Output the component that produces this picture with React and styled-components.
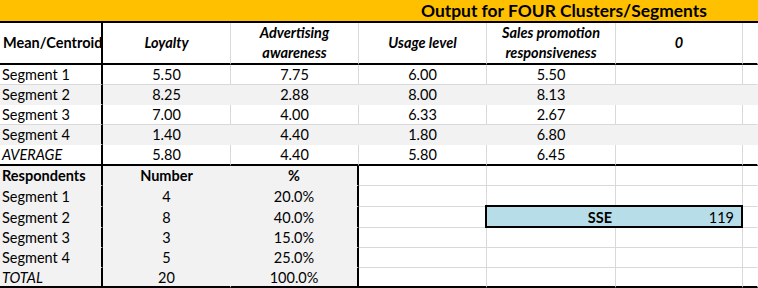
import React from 'react';
import styled, { createGlobalStyle } from 'styled-components';

const GlobalStyle = createGlobalStyle`
  html, body {
    margin: 0;
    padding: 0;
    background: #ffffff;
  }
  body {
    font-family: 'Lato', 'Liberation Sans', sans-serif;
    color: #000;
  }
`;

const GRID = '#d9d9d9';
const GRAY = '#f2f2f2';

const Sheet = styled.div`
  display: grid;
  width: 758px;
  grid-template-columns: 103px 128px 128px 128px 129px 127px 15px;
  grid-template-rows: 23px 42px 20px 20px 20px 20px 21px 20px 21px 21px 20px 20px 20px;
  font-size: 14.5px;
  overflow: hidden;
`;

const TitleBar = styled.div`
  grid-column: 1 / -1;
  background: #ffc000;
  border-bottom: 2px solid #000;
  display: flex;
  align-items: center;
  padding: 1px 0 0 421px;
  font-size: 17.4px;
  font-weight: 700;
  white-space: nowrap;
  line-height: 1;
`;

const borderFor = (kind, bg) => {
  if (kind === 'thick') return '2px solid #000';
  if (kind === 'none') return `1px solid ${bg}`;
  return `1px solid ${GRID}`;
};

const Cell = styled.div`
  box-sizing: border-box;
  background: ${(p) => p.$bg || '#fff'};
  border-right: ${(p) => borderFor(p.$right, p.$bg || '#fff')};
  border-bottom: ${(p) => borderFor(p.$bottom, p.$bg || '#fff')};
  display: flex;
  align-items: center;
  justify-content: ${(p) => (p.$align === 'left' ? 'flex-start' : p.$align === 'right' ? 'flex-end' : 'center')};
  text-align: ${(p) => p.$align || 'center'};
  padding: 2px 2px 0 2px;
  font-weight: ${(p) => (p.$bold ? 700 : 400)};
  font-style: ${(p) => (p.$italic ? 'italic' : 'normal')};
  line-height: 1.3;
  white-space: nowrap;
`;

const HeadCell = styled(Cell)`
  white-space: normal;
  line-height: 20px;
  padding-top: 0;
  padding-left: ${(p) => (p.$align === 'left' ? '3px' : '2px')};
`;

const ScoreBox = styled.div`
  grid-column: 5 / 7;
  margin: -2px 0 0 -2px;
  position: relative;
  z-index: 1;
  box-sizing: border-box;
  background: #b7dee8;
  border: 2px solid #000;
  display: grid;
  grid-template-columns: 128px 1fr;
  align-items: center;
  padding-top: 2px;
`;

const ScoreLabel = styled.span`
  font-weight: 700;
  text-align: right;
  padding-right: 3px;
`;

const ScoreValue = styled.span`
  text-align: right;
  padding-right: 7px;
`;

const headers = ['Loyalty', 'Advertising awareness', 'Usage level', 'Sales promotion responsiveness', '0'];

const centroids = [
  { name: 'Segment 1', vals: ['5.50', '7.75', '6.00', '5.50'] },
  { name: 'Segment 2', vals: ['8.25', '2.88', '8.00', '8.13'], shaded: true },
  { name: 'Segment 3', vals: ['7.00', '4.00', '6.33', '2.67'] },
  { name: 'Segment 4', vals: ['1.40', '4.40', '1.80', '6.80'], shaded: true },
  { name: 'AVERAGE', vals: ['5.80', '4.40', '5.80', '6.45'], italic: true, last: true },
];

const respondents = [
  { name: 'Segment 1', n: '4', pct: '20.0%' },
  { name: 'Segment 2', n: '8', pct: '40.0%', sse: true },
  { name: 'Segment 3', n: '3', pct: '15.0%' },
  { name: 'Segment 4', n: '5', pct: '25.0%' },
  { name: 'TOTAL', n: '20', pct: '100.0%', italic: true, last: true },
];

const CentroidRow = ({ row }) => {
  const bg = row.shaded ? GRAY : '#fff';
  const inner = row.shaded ? 'none' : 'grid';
  const bottom = row.last ? 'thick' : row.shaded ? 'none' : 'grid';
  const cells = [...row.vals, ''];
  return (
    <>
      <Cell $align="left" $bg={bg} $right="thick" $bottom={bottom} $italic={row.italic}>
        {row.name}
      </Cell>
      {cells.map((v, i) => (
        <Cell key={i} $bg={bg} $right={inner} $bottom={bottom}>
          {v}
        </Cell>
      ))}
      <Cell $bg={bg} $right="none" $bottom={bottom} />
    </>
  );
};

const RespondentRow = ({ row }) => {
  const bottom = row.last ? 'thick' : 'none';
  const gridBottom = row.last ? 'thick' : 'grid';
  return (
    <>
      <Cell $align="left" $bg={GRAY} $right="thick" $bottom={bottom} $italic={row.italic}>
        {row.name}
      </Cell>
      <Cell $bg={GRAY} $right="none" $bottom={bottom}>{row.n}</Cell>
      <Cell $bg={GRAY} $right="thick" $bottom={bottom}>{row.pct}</Cell>
      <Cell $right="grid" $bottom={gridBottom} />
      {row.sse ? (
        <ScoreBox>
          <ScoreLabel>SSE</ScoreLabel>
          <ScoreValue>119</ScoreValue>
        </ScoreBox>
      ) : (
        <>
          <Cell $right="grid" $bottom={gridBottom} />
          <Cell $right="grid" $bottom={gridBottom} />
        </>
      )}
      <Cell $right="none" $bottom={gridBottom} />
    </>
  );
};

export default function App() {
  return (
    <>
      <GlobalStyle />
      <Sheet>
        <TitleBar>Output for FOUR Clusters/Segments</TitleBar>

        <HeadCell $align="left" $right="thick" $bottom="thick" $bold>
          Mean/Centroid
        </HeadCell>
        {headers.map((h) => (
          <HeadCell key={h} $right="grid" $bottom="thick" $bold $italic>
            {h}
          </HeadCell>
        ))}
        <HeadCell $right="none" $bottom="thick" />

        {centroids.map((r) => (
          <CentroidRow key={r.name} row={r} />
        ))}

        <Cell $align="left" $bg={GRAY} $right="thick" $bottom="none" $bold>
          Respondents
        </Cell>
        <Cell $bg={GRAY} $right="none" $bottom="none" $bold>Number</Cell>
        <Cell $bg={GRAY} $right="thick" $bottom="none" $bold>%</Cell>
        <Cell $right="grid" $bottom="grid" />
        <Cell $right="grid" $bottom="grid" />
        <Cell $right="grid" $bottom="grid" />
        <Cell $right="none" $bottom="grid" />

        {respondents.map((r) => (
          <RespondentRow key={r.name} row={r} />
        ))}
      </Sheet>
    </>
  );
}
